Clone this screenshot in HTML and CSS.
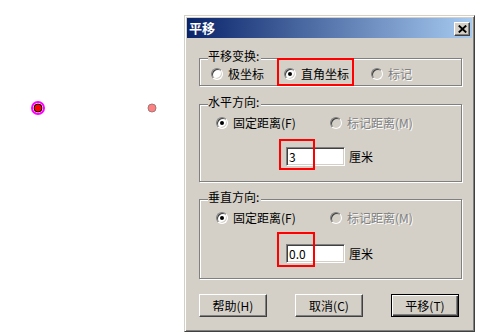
FILE: index.html
```html
<!DOCTYPE html>
<html lang="zh-CN">
<head>
<meta charset="UTF-8">
<title>平移</title>
<link rel="stylesheet" href="styles.css">
</head>
<body>

<div class="canvas">
    <svg width="184" height="335" viewBox="0 0 184 335">
        <circle cx="38" cy="108" r="6" fill="none" stroke="#ff00ff" stroke-width="2"/>
        <circle cx="38" cy="108" r="4" fill="#ff0000" stroke="#000" stroke-width="1"/>
        <circle cx="152" cy="108" r="4" fill="#ff8080" stroke="#a07878" stroke-width="1"/>
    </svg>
</div>

<div class="dialog">
    <div class="titlebar">
        <span class="title">平移</span>
        <span class="close">
            <svg width="9" height="8" viewBox="0 0 9 8"><path d="M0.8 0.6 L8.2 7.4 M8.2 0.6 L0.8 7.4" stroke="#000" stroke-width="2"/></svg>
        </span>
    </div>

    <div class="dlg-body">
        <div class="group group-mode">
            <span class="group-title">平移变换:</span>
            <div class="radio-row">
                <label class="opt opt-polar"><span class="radio"></span>极坐标</label>
                <label class="opt opt-rect"><span class="radio checked"></span>直角坐标</label>
                <label class="opt disabled"><span class="radio"></span>标记</label>
            </div>
            <span class="mark mark-mode"></span>
        </div>

        <div class="group group-h">
            <span class="group-title">水平方向:</span>
            <div class="radio-row">
                <label class="opt opt-fixed"><span class="radio checked"></span>固定距离(F)</label>
                <label class="opt disabled"><span class="radio"></span>标记距离(M)</label>
            </div>
            <div class="field-row">
                <input class="num" type="text" value="3">
                <span class="unit">厘米</span>
            </div>
            <span class="mark mark-h"></span>
        </div>

        <div class="group group-v">
            <span class="group-title">垂直方向:</span>
            <div class="radio-row">
                <label class="opt opt-fixed"><span class="radio checked"></span>固定距离(F)</label>
                <label class="opt disabled"><span class="radio"></span>标记距离(M)</label>
            </div>
            <div class="field-row">
                <input class="num" type="text" value="0.0">
                <span class="unit">厘米</span>
            </div>
            <span class="mark mark-v"></span>
        </div>

        <div class="buttons">
            <button class="btn">帮助(H)</button>
            <button class="btn">取消(C)</button>
            <button class="btn default">平移(T)</button>
        </div>
    </div>
</div>

</body>
</html>
```

FILE: styles.css
```css
* {
    box-sizing: border-box;
    margin: 0;
    padding: 0;
}

body {
    display: flex;
    width: 492px;
    height: 335px;
    overflow: hidden;
    background: #fff;
    font-family: "Noto Sans CJK SC", "Liberation Sans", sans-serif;
    font-size: 12px;
    line-height: 14px;
    color: #000;
}

.canvas {
    width: 184px;
    flex: 0 0 184px;
}

.canvas svg {
    display: block;
}

/* window frame */
.dialog {
    margin-top: 15px;
    width: 291px;
    height: 317px;
    background: #d4d0c8;
    border: 1px solid;
    border-color: #d4d0c8 #404040 #404040 #d4d0c8;
    box-shadow: inset 1px 1px 0 #fff, inset -1px -1px 0 #808080;
    padding: 2px;
}

.titlebar {
    height: 20px;
    display: flex;
    align-items: center;
    justify-content: space-between;
    padding: 0 2px 0 2px;
    background: linear-gradient(to right, #0a246a, #a6caf0);
}

.title {
    color: #fff;
    font-weight: bold;
    font-size: 13px;
}

.close {
    width: 16px;
    height: 14px;
    margin-top: 2px;
    display: flex;
    align-items: center;
    justify-content: center;
    background: #d4d0c8;
    border: 1px solid;
    border-color: #fff #404040 #404040 #fff;
    box-shadow: inset -1px -1px 0 #808080;
}

.dlg-body {
    padding: 20px 10px 0 12px;
}

/* etched group boxes */
.group {
    position: relative;
    border: 1px solid #808080;
    box-shadow: 1px 1px 0 #fff, inset 1px 1px 0 #fff;
}

.group-mode {
    height: 28px;
}

.group-h {
    height: 78px;
    margin-top: 18px;
}

.group-v {
    height: 80px;
    margin-top: 17px;
}

.group-title {
    position: absolute;
    top: -10px;
    left: 8px;
    padding-right: 2px;
    background: #d4d0c8;
}

.radio-row {
    display: flex;
    height: 14px;
    margin-top: 11px;
    padding-left: 16px;
}

.group-mode .radio-row {
    margin-top: 8px;
    padding-left: 11px;
}

.opt {
    display: flex;
    align-items: center;
    white-space: nowrap;
}

.opt-polar {
    width: 73px;
}

.opt-rect {
    width: 87px;
}

.opt-fixed {
    width: 114px;
}

.opt.disabled {
    color: #808080;
    text-shadow: 1px 1px 0 #fff;
}

.radio {
    position: relative;
    width: 12px;
    height: 12px;
    margin-right: 5px;
    border-radius: 50%;
    background: #fff;
    border: 1px solid;
    border-color: #808080 #fff #fff #808080;
    box-shadow: inset 1px 1px 0 #404040, inset -1px -1px 0 #d4d0c8;
}

.disabled .radio {
    background: #d4d0c8;
}

.radio.checked::after {
    content: "";
    position: absolute;
    left: 3px;
    top: 3px;
    width: 4px;
    height: 4px;
    border-radius: 50%;
    background: #000;
}

.field-row {
    display: flex;
    align-items: center;
    margin-top: 17px;
    padding-left: 86px;
}

.group-v .field-row {
    margin-top: 19px;
}

.num {
    width: 59px;
    height: 19px;
    padding: 0 2px;
    background: #fff;
    border: 1px solid;
    border-color: #808080 #fff #fff #808080;
    box-shadow: inset 1px 1px 0 #404040, inset -1px -1px 0 #d4d0c8;
    font: inherit;
    outline: none;
}

.unit {
    margin-left: 4px;
}

/* red annotation boxes */
.mark {
    position: absolute;
    border: 2px solid #ff0000;
}

.mark-mode {
    left: 77px;
    top: -1px;
    width: 77px;
    height: 28px;
}

.mark-h {
    left: 79px;
    top: 34px;
    width: 36px;
    height: 31px;
}

.mark-v {
    left: 77px;
    top: 32px;
    width: 38px;
    height: 35px;
}

.buttons {
    display: flex;
    gap: 28px;
    margin-top: 15px;
}

.btn {
    width: 68px;
    height: 23px;
    background: #d4d0c8;
    border: 1px solid;
    border-color: #fff #404040 #404040 #fff;
    box-shadow: inset -1px -1px 0 #808080;
    font: inherit;
    color: #000;
}

.btn.default {
    border-color: #000;
    box-shadow: inset 1px 1px 0 #fff, inset -1px -1px 0 #404040, inset -2px -2px 0 #808080;
}
```
